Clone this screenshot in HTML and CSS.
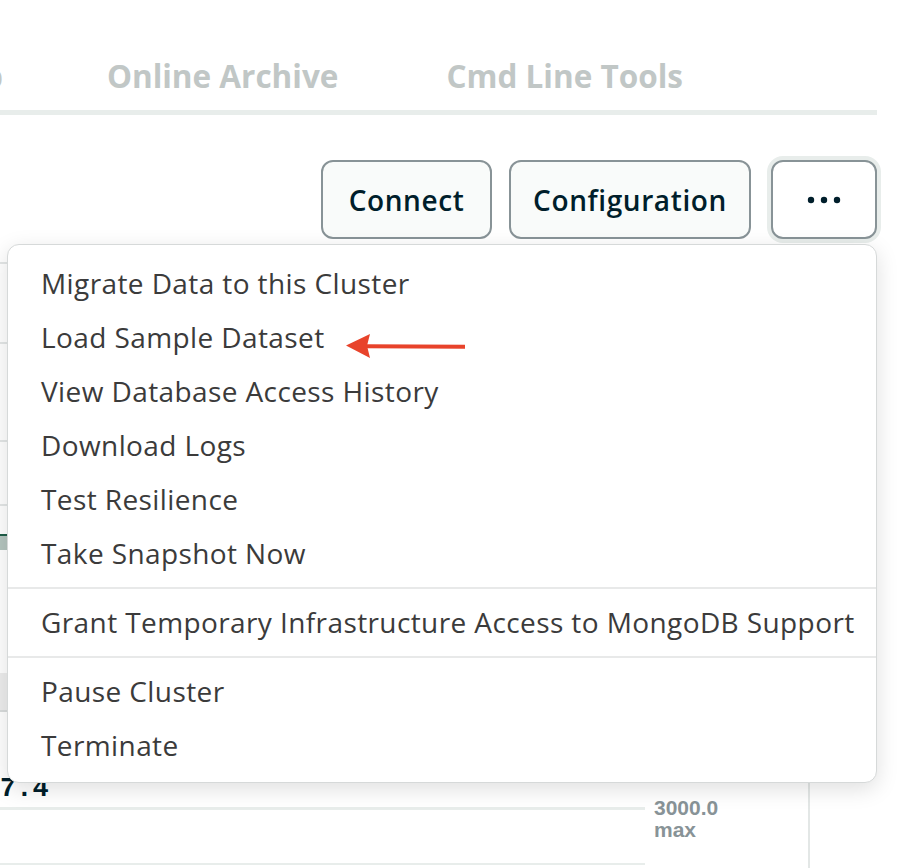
FILE: index.html
```html
<!DOCTYPE html>
<html lang="en">
<head>
<meta charset="utf-8">
<title>Cluster menu</title>
<link rel="stylesheet" href="styles.css">
</head>
<body>
<div class="page">
  <header class="tabs">
    <nav class="tab-row">
      <span class="tab tab-cut">Backup</span>
      <span class="tab">Online Archive</span>
      <span class="tab">Cmd Line Tools</span>
    </nav>
    <div class="tab-bar"></div>
  </header>

  <div class="toolbar">
    <button class="btn btn-connect">Connect</button>
    <button class="btn btn-config">Configuration</button>
    <button class="btn btn-more" aria-label="More actions">
      <svg width="34" height="8" viewBox="0 0 34 8"><circle cx="4" cy="4" r="3.2" fill="#001e2b"/><circle cx="17" cy="4" r="3.2" fill="#001e2b"/><circle cx="30" cy="4" r="3.2" fill="#001e2b"/></svg>
    </button>
  </div>

  <section class="bg">
    <div class="row row-a"></div>
    <div class="row row-b"></div>
    <div class="row row-c"></div>
    <div class="row row-d"></div>
    <div class="row row-e"></div>
    <div class="green-bar"></div>
    <div class="spacer-a"></div>
    <div class="gray-band"></div>
    <div class="metric">
      <div class="metric-main">
        <div class="metric-value">7.4</div>
        <div class="chart">
          <div class="chart-lines">
            <div class="chart-line top"></div>
            <div class="chart-line bottom"></div>
          </div>
          <div class="chart-labels">
            <div>3000.0</div>
            <div>max</div>
          </div>
        </div>
      </div>
    </div>
  </section>

  <div class="menu" role="menu">
    <ul class="menu-group">
      <li class="menu-item">Migrate Data to this Cluster</li>
      <li class="menu-item">Load Sample Dataset</li>
      <li class="menu-item">View Database Access History</li>
      <li class="menu-item">Download Logs</li>
      <li class="menu-item">Test Resilience</li>
      <li class="menu-item">Take Snapshot Now</li>
    </ul>
    <div class="menu-sep"></div>
    <ul class="menu-group">
      <li class="menu-item">Grant Temporary Infrastructure Access to MongoDB Support</li>
    </ul>
    <div class="menu-sep"></div>
    <ul class="menu-group">
      <li class="menu-item">Pause Cluster</li>
      <li class="menu-item">Terminate</li>
    </ul>
  </div>

  <svg class="arrow" width="124" height="28" viewBox="0 0 124 28">
    <line x1="20" y1="12.2" x2="119" y2="12.8" stroke="#e8432b" stroke-width="4"/>
    <polygon points="0,11.5 24,0 21,11.8 24,24" fill="#e8432b"/>
  </svg>
</div>
</body>
</html>
```

FILE: styles.css
```css
* { box-sizing: border-box; }
html, body { margin: 0; padding: 0; background: #ffffff; }
body { font-family: "Open Sans", "Liberation Sans", sans-serif; }

.page {
  position: relative;
  width: 912px;
  height: 868px;
  overflow: hidden;
}

/* Tabs */
.tabs { margin-right: 35px; }
.tab-row {
  display: flex;
  justify-content: flex-end;
  gap: 108px;
  padding: 56px 194px 0 0;
  height: 110px;
  overflow: hidden;
  white-space: nowrap;
}
.tab {
  flex-shrink: 0;
  font-size: 31.5px;
  line-height: 40px;
  font-weight: 700;
  color: #c1c7c6;
}
.tab-cut { margin-right: -4px; }
.tab-bar {
  height: 5px;
  background: #e8edeb;
}

/* Toolbar */
.toolbar {
  display: flex;
  justify-content: flex-end;
  gap: 17px;
  margin-top: 45px;
  padding-right: 35px;
}
.btn {
  height: 79px;
  border: 2px solid #889397;
  border-radius: 12px;
  background: #f9fbfa;
  color: #001e2b;
  font-family: "Open Sans", "Liberation Sans", sans-serif;
  font-size: 28px;
  letter-spacing: 0.6px;
  font-weight: 600;
  padding: 0;
  display: flex;
  align-items: center;
  justify-content: center;
}
.btn-connect { width: 171px; }
.btn-config { width: 242px; }
.btn-more {
  width: 106px;
  margin-left: 3px;
  background: #ffffff;
  box-shadow: 0 0 0 4px #e8edeb;
}

/* Background content (behind menu) */
.row { border-bottom: 2px solid #e3e6e6; margin-right: 104px; }
.row-a { height: 25px; }
.row-b { height: 80px; }
.row-c { height: 98px; }
.row-d { height: 64px; }
.row-e { height: 28px; border-bottom: 0; }
.green-bar {
  height: 16px;
  border-top: 2px solid #1f5e48;
  background: #b5c5bf;
  margin-right: 104px;
}
.spacer-a { height: 123px; }
.gray-band {
  height: 39px;
  background: #ededed;
  border-bottom: 2px solid #d9dcdc;
  margin-right: 104px;
}
.metric { width: 810px; border-right: 2px solid #e3e7e6; }
.metric-value {
  padding-top: 62px;
  font-family: "Liberation Mono", monospace;
  font-weight: 700;
  font-size: 27px;
  line-height: 30px;
  color: #001e2b;
  height: 95px;
}
.chart { display: flex; height: 80px; }
.chart-lines { width: 645px; }
.chart-line { background: #e8edeb; }
.chart-line.top { height: 3px; }
.chart-line.bottom { height: 2px; margin-top: 53px; }
.chart-labels {
  padding-left: 9px;
  margin-top: -10px;
  font-family: "Liberation Sans", Arial, sans-serif;
  font-weight: 700;
  font-size: 21px;
  line-height: 22px;
  color: #889397;
}

/* Menu */
.menu {
  position: absolute;
  left: 7px;
  top: 244px;
  width: 870px;
  padding: 11px 0 10px;
  background: #ffffff;
  border: 1px solid #d6d9d9;
  border-radius: 12px;
  box-shadow: 0 6px 22px rgba(0, 0, 0, 0.13);
}
.menu-group { list-style: none; margin: 0; padding: 0; }
.menu-item {
  height: 54px;
  line-height: 54px;
  padding-left: 33px;
  font-size: 28px;
  letter-spacing: 0.4px;
  color: #3b3b3b;
  white-space: nowrap;
}
.menu-sep {
  height: 2px;
  background: #e8e9e9;
  margin: 7px 0 6px;
}

/* Annotation arrow */
.arrow {
  position: absolute;
  left: 346px;
  top: 334px;
}
```
